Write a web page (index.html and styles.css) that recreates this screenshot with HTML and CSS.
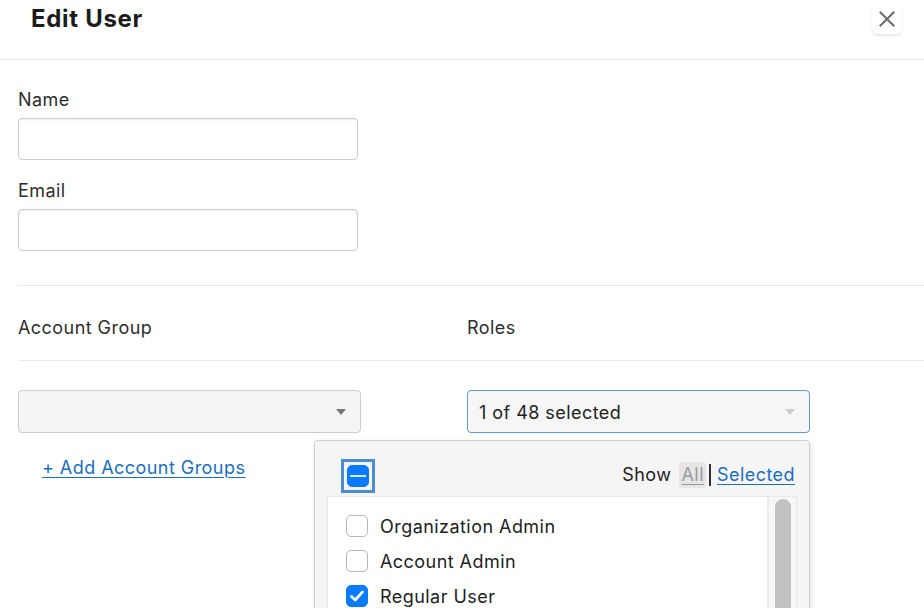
FILE: index.html
```html
<!DOCTYPE html>
<html lang="en">
<head>
<meta charset="utf-8">
<title>Edit User</title>
<link rel="stylesheet" href="styles.css">
</head>
<body>
<div class="modal">
  <header class="modal-header">
    <h1 class="modal-title">Edit User</h1>
    <button class="close-btn" aria-label="Close">
      <svg width="16" height="16" viewBox="0 0 16 16"><path d="M1.5 1.5 L14.5 14.5 M14.5 1.5 L1.5 14.5" stroke="#6a6a6a" stroke-width="2" fill="none" stroke-linecap="square"/></svg>
    </button>
  </header>
  <div class="modal-body">
    <div class="field">
      <label class="label">Name</label>
      <input class="text-input" type="text">
    </div>
    <div class="field">
      <label class="label">Email</label>
      <input class="text-input" type="text">
    </div>
    <div class="section-head">
      <div class="label">Account Group</div>
      <div class="label">Roles</div>
    </div>
    <div class="select-row">
      <div class="col">
        <div class="select">
          <span class="select-text"></span>
          <span class="caret dark"></span>
        </div>
        <a class="add-link" href="#">+ Add Account Groups</a>
      </div>
      <div class="col roles-col">
        <div class="select focused">
          <span class="select-text">1 of 48 selected</span>
          <span class="caret light"></span>
        </div>
        <div class="dropdown">
          <div class="dd-head">
            <span class="focus-ring"><span class="cb indeterminate"><span class="minus"></span></span></span>
            <div class="show">
              <span class="show-label">Show</span>
              <span class="show-all">All</span>
              <span class="divider"></span>
              <a class="show-selected" href="#">Selected</a>
            </div>
          </div>
          <div class="dd-list">
            <div class="items">
              <div class="item"><span class="cb"></span><span class="item-text">Organization Admin</span></div>
              <div class="item"><span class="cb"></span><span class="item-text">Account Admin</span></div>
              <div class="item"><span class="cb checked"><svg width="22" height="22" viewBox="0 0 22 22"><path d="M5.5 11.5 L9.2 15 L16.5 7" stroke="#fff" stroke-width="2.6" fill="none" stroke-linecap="round" stroke-linejoin="round"/></svg></span><span class="item-text">Regular User</span></div>
              <div class="item"><span class="cb"></span><span class="item-text">Read Only User</span></div>
              <div class="item"><span class="cb"></span><span class="item-text">Billing Admin</span></div>
            </div>
            <div class="track"><div class="thumb"></div></div>
          </div>
        </div>
      </div>
    </div>
  </div>
</div>
</body>
</html>
```
FILE: styles.css
```css
* { box-sizing: border-box; }
html, body {
  margin: 0;
  padding: 0;
  background: #ffffff;
  height: 608px;
  overflow: hidden;
}
body {
  font-family: "Inter", "Noto Sans", sans-serif;
  color: #2b2b2b;
  letter-spacing: 0.45px;
}
.modal {
  width: 924px;
  height: 608px;
  overflow: hidden;
}
.modal-header {
  height: 60px;
  border-bottom: 1px solid #e8e8e8;
  display: flex;
  justify-content: space-between;
  align-items: flex-start;
  padding: 0 22px 0 31px;
}
.modal-title {
  margin: 0;
  padding-top: 4px;
  font-size: 24px;
  line-height: 30px;
  font-weight: 700;
  color: #1c1c1c;
  letter-spacing: 0.7px;
}
.close-btn {
  margin-top: 4px;
  width: 30px;
  height: 30px;
  border: none;
  border-radius: 5px;
  background: #fff;
  box-shadow: 0 2px 2px rgba(0,0,0,0.09);
  display: flex;
  align-items: center;
  justify-content: center;
  padding: 0;
}
.modal-body {
  padding-left: 18px;
  position: relative;
}
.field {
  margin-bottom: 19px;
}
.field:first-child {
  margin-top: 28px;
}
.label {
  display: block;
  font-size: 18px;
  line-height: 24px;
  color: #2e2e2e;
  margin-bottom: 6px;
}
.text-input {
  display: block;
  width: 340px;
  height: 42px;
  border: 1px solid #cccccc;
  border-radius: 4px;
  background: #fff;
  box-shadow: inset 0 1px 2px rgba(0,0,0,0.08);
  font: inherit;
}
.section-head {
  margin-top: 34px;
  border-top: 1px solid #e8e8e8;
  border-bottom: 1px solid #e8e8e8;
  padding: 30px 0 20px;
  display: grid;
  grid-template-columns: 449px 1fr;
}
.section-head .label {
  margin: 0;
}
.select-row {
  margin-top: 29px;
  display: grid;
  grid-template-columns: 449px 1fr;
}
.col {
  display: flex;
  flex-direction: column;
  align-items: flex-start;
}
.roles-col {
  position: relative;
}
.select {
  width: 343px;
  height: 43px;
  border: 1px solid #cccccc;
  border-radius: 4px;
  background: #f5f5f5;
  display: flex;
  align-items: center;
  justify-content: space-between;
  padding: 0 14px 0 11px;
}
.select.focused {
  border-color: #5f9ad8;
  background: #f6f6f6;
}
.select-text {
  font-size: 18px;
  line-height: 22px;
  padding-top: 2px;
  color: #222;
}
.caret {
  width: 0;
  height: 0;
  border-left: 5.5px solid transparent;
  border-right: 5.5px solid transparent;
  border-top: 6px solid #777;
  margin-top: 1px;
}
.caret.light {
  border-top-color: #cbcbcb;
}
.add-link {
  margin-top: 23px;
  margin-left: 24px;
  font-size: 18px;
  line-height: 24px;
  color: #1b6ec2;
  text-decoration: underline;
  text-underline-offset: 3px;
  text-decoration-thickness: 1px;
}
.dropdown {
  position: absolute;
  top: 50px;
  left: -153px;
  width: 496px;
  height: 400px;
  background: #f5f5f5;
  border: 1px solid #cfcfcf;
  border-radius: 4px 4px 0 0;
  box-shadow: 1px 2px 5px rgba(0,0,0,0.14);
  padding: 0 12px;
}
.dd-head {
  display: flex;
  justify-content: space-between;
  align-items: center;
  padding: 18px 2px 3px 14px;
}
.focus-ring {
  display: inline-flex;
  border: 3px solid #4a8dd2;
  padding: 3px;
}
.cb {
  width: 22px;
  height: 22px;
  flex: none;
  border: 1.5px solid #b5b5bd;
  border-radius: 5px;
  background: #fff;
  display: inline-flex;
  align-items: center;
  justify-content: center;
}
.cb.checked, .cb.indeterminate {
  background: #0a7aff;
  border-color: #0a7aff;
}
.cb.checked svg {
  margin: -1.5px;
}
.minus {
  width: 16px;
  height: 2px;
  background: #d9e9ff;
}
.show {
  display: flex;
  align-items: center;
  font-size: 18px;
  line-height: 22px;
  margin-bottom: 2px;
}
.show-label {
  color: #222;
  margin-right: 8px;
}
.show-all {
  padding: 2px 2px;
  background: #e6e6e6;
  border-radius: 3px;
  color: #9b9b9b;
  text-decoration: underline;
  text-underline-offset: 3px;
  text-decoration-thickness: 1px;
}
.divider {
  width: 2px;
  height: 22px;
  background: #333;
  margin: 0 6px 0 3px;
}
.show-selected {
  color: #1b6ec2;
  text-decoration: underline;
  text-underline-offset: 3px;
  text-decoration-thickness: 1px;
}
.dd-list {
  display: flex;
  background: #fff;
  border: 1px solid #e8e8e8;
  height: 320px;
}
.items {
  flex: 1;
  padding: 11px 0 0 18px;
}
.item {
  height: 35px;
  display: flex;
  align-items: center;
  gap: 12px;
}
.item-text {
  font-size: 18px;
  line-height: 22px;
  padding-top: 2px;
  color: #222;
}
.track {
  width: 29px;
  border-left: 2px solid #ececec;
  background: #f7f7f7;
  padding: 2px 0 0 6px;
}
.thumb {
  width: 16px;
  height: 240px;
  border-radius: 8px;
  background: #c1c1c1;
}
```
